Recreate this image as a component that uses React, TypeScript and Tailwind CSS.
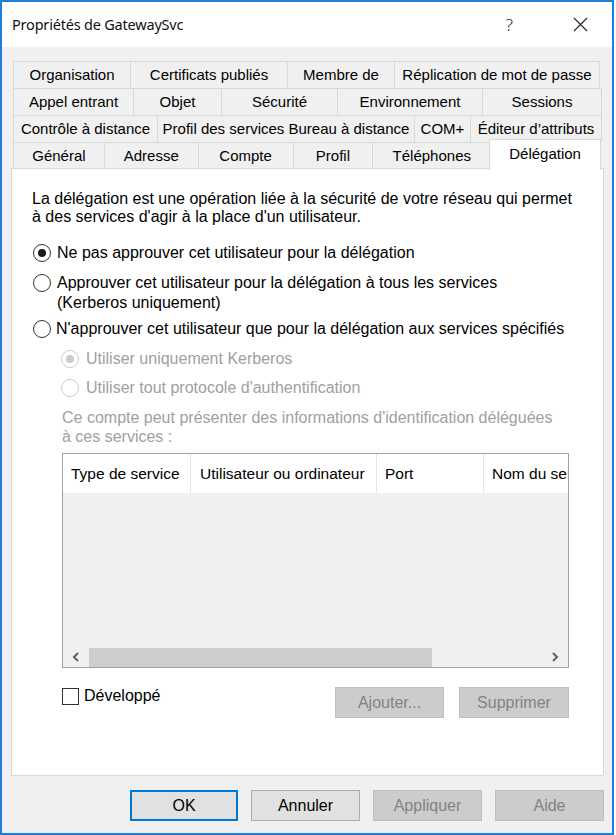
import React from "react";

const Radio = ({ checked, disabled }: { checked?: boolean; disabled?: boolean }) => (
  <span
    className={
      disabled
        ? "w-[18px] h-[18px] rounded-full border border-[#cccccc] bg-white flex items-center justify-center shrink-0"
        : "w-[18px] h-[18px] rounded-full border border-[#333333] bg-white flex items-center justify-center shrink-0"
    }
  >
    {checked && (
      <span
        className={
          disabled ? "w-[8px] h-[8px] rounded-full bg-[#cccccc]" : "w-[8px] h-[8px] rounded-full bg-[#1a1a1a]"
        }
      />
    )}
  </span>
);

const Tab = ({ label, w, last }: { label: string; w: string; last?: boolean }) => (
  <div
    className={`${w} h-[27px] border-t border-l border-[#d9d9d9] bg-[#f0f0f0] flex items-center justify-center whitespace-nowrap ${
      last ? "border-r" : ""
    }`}
  >
    {label}
  </div>
);

export default function App() {
  return (
    <div className="w-[616px] h-[835px] bg-white">
      <div className="w-[614px] h-[835px] border-2 border-[#1c80d6] flex flex-col font-['Liberation_Sans',Arial,sans-serif] text-[16px] text-black">
        {/* Title bar */}
        <div className="h-[45px] bg-white flex items-center shrink-0">
          <div className="pl-[10px] font-['Noto_Sans',sans-serif] text-[14.5px] tracking-[-0.2px] text-[#111]">
            Propriétés de GatewaySvc
          </div>
          <div className="flex-1" />
          <div className="font-['Noto_Sans',sans-serif] text-[17px] font-light text-[#222] mr-[60px]">?</div>
          <svg width="15" height="15" viewBox="0 0 15 15" className="mr-[24px]">
            <path d="M1 1 L14 14 M14 1 L1 14" stroke="#222" strokeWidth="1.1" fill="none" />
          </svg>
        </div>

        {/* Body */}
        <div className="flex-1 bg-[#f0f0f0] pt-[14px] pl-[9px] flex flex-col">
          {/* Tabs */}
          <div className="ml-[2px] w-[589px] flex flex-col text-[15px]">
            <div className="flex">
              <Tab label="Organisation" w="w-[117px]" />
              <Tab label="Certificats publiés" w="w-[157px]" />
              <Tab label="Membre de" w="w-[107px]" />
              <Tab label="Réplication de mot de passe" w="w-[206px]" last />
            </div>
            <div className="flex">
              <Tab label="Appel entrant" w="w-[120px]" />
              <Tab label="Objet" w="w-[88px]" />
              <Tab label="Sécurité" w="w-[116px]" />
              <Tab label="Environnement" w="w-[145px]" />
              <Tab label="Sessions" w="w-[120px]" last />
            </div>
            <div className="flex">
              <Tab label="Contrôle à distance" w="w-[144px]" />
              <Tab label="Profil des services Bureau à distance" w="w-[257px]" />
              <Tab label="COM+" w="w-[56px]" />
              <Tab label="Éditeur d’attributs" w="w-[132px]" last />
            </div>
            <div className="flex h-[26px]">
              <Tab label="Général" w="w-[91px]" />
              <Tab label="Adresse" w="w-[94px]" />
              <Tab label="Compte" w="w-[95px]" />
              <Tab label="Profil" w="w-[80px]" />
              <div className="w-[118px] h-[27px] border-t border-l border-[#d9d9d9] bg-[#f0f0f0] flex items-center justify-center">
                Téléphones
              </div>
              <div className="relative z-10 -top-[3px] -left-px w-[112px] h-[31px] border-t border-l border-r border-[#d9d9d9] bg-white flex items-start justify-center pt-[3px]">
                Délégation
              </div>
            </div>
          </div>

          {/* Panel */}
          <div className="w-[593px] h-[608px] border border-[#d9d9d9] bg-white pt-[21px] pl-[20px] flex flex-col">
            <div className="leading-[18px]">
              La délégation est une opération liée à la sécurité de votre réseau qui permet
              <br />à des services d'agir à la place d'un utilisateur.
            </div>

            <div className="mt-[18px] h-[18px] flex items-center gap-[6px] pl-[1px]">
              <Radio checked />
              <span>Ne pas approuver cet utilisateur pour la délégation</span>
            </div>

            <div className="mt-[11px] flex flex-col pl-[1px]">
              <div className="h-[20px] flex items-center gap-[6px]">
                <Radio />
                <span>Approuver cet utilisateur pour la délégation à tous les services</span>
              </div>
              <div className="h-[20px] flex items-center pl-[24px]">(Kerberos uniquement)</div>
            </div>

            <div className="mt-[6px] h-[20px] flex items-center gap-[5px] pl-[1px]">
              <Radio />
              <span>N'approuver cet utilisateur que pour la délégation aux services spécifiés</span>
            </div>

            <div className="mt-[10px] h-[20px] flex items-center gap-[7px] pl-[29px] text-[#a0a0a0]">
              <Radio checked disabled />
              <span>Utiliser uniquement Kerberos</span>
            </div>
            <div className="mt-[9px] h-[20px] flex items-center gap-[7px] pl-[29px] text-[#a0a0a0]">
              <Radio disabled />
              <span>Utiliser tout protocole d'authentification</span>
            </div>

            <div className="mt-[10px] pl-[30px] leading-[19px] text-[#a0a0a0]">
              Ce compte peut présenter des informations d'identification déléguées
              <br />à ces services :
            </div>

            {/* List */}
            <div className="mt-[7px] ml-[30px] w-[507px] h-[215px] border border-[#a0a0a0] bg-[#f0f0f0] flex flex-col overflow-hidden">
              <div className="h-[39px] bg-white flex shrink-0 whitespace-nowrap text-[15.5px]">
                <div className="w-[128px] border-r border-[#e5e5e5] flex items-center pl-[8px]">Type de service</div>
                <div className="w-[186px] border-r border-[#e5e5e5] flex items-center pl-[9px]">Utilisateur ou ordinateur</div>
                <div className="w-[107px] border-r border-[#e5e5e5] flex items-center pl-[8px]">Port</div>
                <div className="flex-1 flex items-center pl-[8px] overflow-hidden">Nom du service</div>
              </div>
              <div className="flex-1" />
              <div className="h-[20px] flex items-center shrink-0">
                <div className="w-[26px] h-full flex items-center justify-center">
                  <svg width="8" height="10" viewBox="0 0 8 10">
                    <path d="M6 1 L2 5 L6 9" stroke="#606060" strokeWidth="2" fill="none" />
                  </svg>
                </div>
                <div className="w-[343px] h-[19px] bg-[#cdcdcd]" />
                <div className="flex-1" />
                <div className="w-[26px] h-full flex items-center justify-center">
                  <svg width="8" height="10" viewBox="0 0 8 10">
                    <path d="M2 1 L6 5 L2 9" stroke="#606060" strokeWidth="2" fill="none" />
                  </svg>
                </div>
              </div>
            </div>

            <div className="mt-[19px] ml-[30px] w-[507px] flex items-start">
              <div className="flex items-center gap-[5px] h-[18px]">
                <span className="w-[17px] h-[17px] border border-[#333333] bg-white" />
                <span>Développé</span>
              </div>
              <div className="flex-1" />
              <div className="w-[109px] h-[31px] bg-[#cccccc] border border-[#bfbfbf] text-[#838383] flex items-center justify-center">
                Ajouter...
              </div>
              <div className="ml-[15px] w-[110px] h-[31px] bg-[#cccccc] border border-[#bfbfbf] text-[#838383] flex items-center justify-center">
                Supprimer
              </div>
            </div>
          </div>

          {/* Bottom buttons */}
          <div className="mt-[14px] w-[593px] flex justify-end gap-[13px]">
            <div className="w-[108px] h-[31px] bg-[#e1e1e1] border-2 border-[#0078d7] flex items-center justify-center">
              OK
            </div>
            <div className="w-[109px] h-[31px] bg-[#e1e1e1] border border-[#adadad] flex items-center justify-center">
              Annuler
            </div>
            <div className="w-[109px] h-[31px] bg-[#cccccc] border border-[#bfbfbf] text-[#838383] flex items-center justify-center">
              Appliquer
            </div>
            <div className="w-[109px] h-[31px] bg-[#cccccc] border border-[#bfbfbf] text-[#838383] flex items-center justify-center">
              Aide
            </div>
          </div>
        </div>
      </div>
    </div>
  );
}
